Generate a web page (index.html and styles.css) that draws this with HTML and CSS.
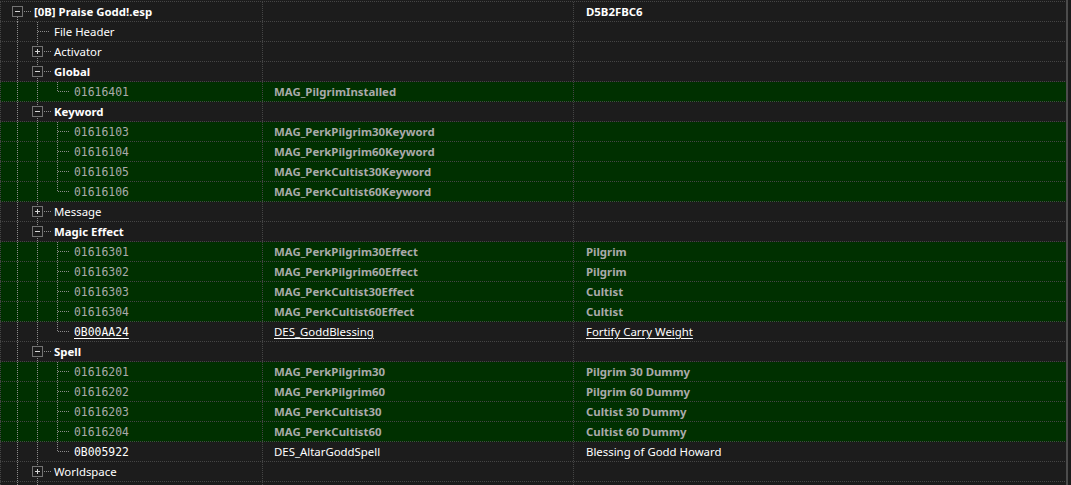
FILE: index.html
```html
<!DOCTYPE html>
<html>
<head>
<meta charset="utf-8">
<title>xEdit tree</title>
<link rel="stylesheet" href="styles.css">
</head>
<body>
<div class="view">
  <div class="tree">
    <div class="row">
      <div class="c1"><span class="e root"><i class="bx minus"></i><i class="h short"></i></span><span class="n b">[0B] Praise Godd!.esp</span></div>
      <div class="c2"></div>
      <div class="c3 b">D5B2FBC6</div>
    </div>
    <div class="row">
      <div class="c1"><span class="s v"></span><span class="e tee"><i class="h"></i></span><span class="n">File Header</span></div>
      <div class="c2"></div><div class="c3"></div>
    </div>
    <div class="row">
      <div class="c1"><span class="s v"></span><span class="e tee"><i class="bx plus"></i><i class="h short"></i></span><span class="n">Activator</span></div>
      <div class="c2"></div><div class="c3"></div>
    </div>
    <div class="row">
      <div class="c1"><span class="s v"></span><span class="e tee"><i class="bx minus"></i><i class="h short"></i></span><span class="n b">Global</span></div>
      <div class="c2"></div><div class="c3"></div>
    </div>
    <div class="row g">
      <div class="c1"><span class="s v"></span><span class="s v"></span><span class="e elb"><i class="h"></i></span><span class="id">01616401</span></div>
      <div class="c2">MAG_PilgrimInstalled</div><div class="c3"></div>
    </div>
    <div class="row">
      <div class="c1"><span class="s v"></span><span class="e tee"><i class="bx minus"></i><i class="h short"></i></span><span class="n b">Keyword</span></div>
      <div class="c2"></div><div class="c3"></div>
    </div>
    <div class="row g">
      <div class="c1"><span class="s v"></span><span class="s v"></span><span class="e tee"><i class="h"></i></span><span class="id">01616103</span></div>
      <div class="c2">MAG_PerkPilgrim30Keyword</div><div class="c3"></div>
    </div>
    <div class="row g">
      <div class="c1"><span class="s v"></span><span class="s v"></span><span class="e tee"><i class="h"></i></span><span class="id">01616104</span></div>
      <div class="c2">MAG_PerkPilgrim60Keyword</div><div class="c3"></div>
    </div>
    <div class="row g">
      <div class="c1"><span class="s v"></span><span class="s v"></span><span class="e tee"><i class="h"></i></span><span class="id">01616105</span></div>
      <div class="c2">MAG_PerkCultist30Keyword</div><div class="c3"></div>
    </div>
    <div class="row g">
      <div class="c1"><span class="s v"></span><span class="s v"></span><span class="e elb"><i class="h"></i></span><span class="id">01616106</span></div>
      <div class="c2">MAG_PerkCultist60Keyword</div><div class="c3"></div>
    </div>
    <div class="row">
      <div class="c1"><span class="s v"></span><span class="e tee"><i class="bx plus"></i><i class="h short"></i></span><span class="n">Message</span></div>
      <div class="c2"></div><div class="c3"></div>
    </div>
    <div class="row">
      <div class="c1"><span class="s v"></span><span class="e tee"><i class="bx minus"></i><i class="h short"></i></span><span class="n b">Magic Effect</span></div>
      <div class="c2"></div><div class="c3"></div>
    </div>
    <div class="row g">
      <div class="c1"><span class="s v"></span><span class="s v"></span><span class="e tee"><i class="h"></i></span><span class="id">01616301</span></div>
      <div class="c2">MAG_PerkPilgrim30Effect</div><div class="c3">Pilgrim</div>
    </div>
    <div class="row g">
      <div class="c1"><span class="s v"></span><span class="s v"></span><span class="e tee"><i class="h"></i></span><span class="id">01616302</span></div>
      <div class="c2">MAG_PerkPilgrim60Effect</div><div class="c3">Pilgrim</div>
    </div>
    <div class="row g">
      <div class="c1"><span class="s v"></span><span class="s v"></span><span class="e tee"><i class="h"></i></span><span class="id">01616303</span></div>
      <div class="c2">MAG_PerkCultist30Effect</div><div class="c3">Cultist</div>
    </div>
    <div class="row g">
      <div class="c1"><span class="s v"></span><span class="s v"></span><span class="e tee"><i class="h"></i></span><span class="id">01616304</span></div>
      <div class="c2">MAG_PerkCultist60Effect</div><div class="c3">Cultist</div>
    </div>
    <div class="row u">
      <div class="c1"><span class="s v"></span><span class="s v"></span><span class="e elb"><i class="h"></i></span><span class="id">0B00AA24</span></div>
      <div class="c2"><span class="t">DES_GoddBlessing</span></div><div class="c3"><span class="t">Fortify Carry Weight</span></div>
    </div>
    <div class="row">
      <div class="c1"><span class="s v"></span><span class="e tee"><i class="bx minus"></i><i class="h short"></i></span><span class="n b">Spell</span></div>
      <div class="c2"></div><div class="c3"></div>
    </div>
    <div class="row g">
      <div class="c1"><span class="s v"></span><span class="s v"></span><span class="e tee"><i class="h"></i></span><span class="id">01616201</span></div>
      <div class="c2">MAG_PerkPilgrim30</div><div class="c3">Pilgrim 30 Dummy</div>
    </div>
    <div class="row g">
      <div class="c1"><span class="s v"></span><span class="s v"></span><span class="e tee"><i class="h"></i></span><span class="id">01616202</span></div>
      <div class="c2">MAG_PerkPilgrim60</div><div class="c3">Pilgrim 60 Dummy</div>
    </div>
    <div class="row g">
      <div class="c1"><span class="s v"></span><span class="s v"></span><span class="e tee"><i class="h"></i></span><span class="id">01616203</span></div>
      <div class="c2">MAG_PerkCultist30</div><div class="c3">Cultist 30 Dummy</div>
    </div>
    <div class="row g">
      <div class="c1"><span class="s v"></span><span class="s v"></span><span class="e tee"><i class="h"></i></span><span class="id">01616204</span></div>
      <div class="c2">MAG_PerkCultist60</div><div class="c3">Cultist 60 Dummy</div>
    </div>
    <div class="row">
      <div class="c1"><span class="s v"></span><span class="s v"></span><span class="e elb"><i class="h"></i></span><span class="id">0B005922</span></div>
      <div class="c2">DES_AltarGoddSpell</div><div class="c3">Blessing of Godd Howard</div>
    </div>
    <div class="row">
      <div class="c1"><span class="s v"></span><span class="e tee"><i class="bx plus"></i><i class="h short"></i></span><span class="n">Worldspace</span></div>
      <div class="c2"></div><div class="c3"></div>
    </div>
    <div class="row">
      <div class="c1"><span class="s v"></span><span class="s v"></span></div>
      <div class="c2"></div><div class="c3"></div>
    </div>
  </div>
</div>
</body>
</html>
```

FILE: styles.css
```css
html, body {
  margin: 0;
  padding: 0;
  background: #1c1c1c;
  overflow: hidden;
}

.view {
  width: 1071px;
  height: 485px;
  overflow: hidden;
  background: #1c1c1c;
}

.tree {
  width: 1068px;
  height: 485px;
  box-sizing: border-box;
  padding-top: 2px;
  border-right: 2px solid #4c4c4c;
  background-image: repeating-linear-gradient(90deg, #454545 0 1px, transparent 1px 2px);
  background-size: 100% 1px;
  background-position: 0 1px;
  background-repeat: no-repeat;
  font-family: "Noto Sans", "Open Sans", sans-serif;
  font-size: 11.4px;
  color: #ffffff;
}

.row {
  display: flex;
  height: 20px;
  background-image: repeating-linear-gradient(90deg, #454545 0 1px, transparent 1px 2px);
  background-size: 100% 1px;
  background-position: 0 19px;
  background-repeat: no-repeat;
}

.row.g {
  background-color: #003000;
}

.row.g .c2,
.row.g .c3 {
  color: #aaaaaa;
  font-weight: 700;
}

.row.g .id {
  color: #aaaaaa;
}

.c1 {
  width: 262px;
  flex: none;
  display: flex;
  box-sizing: border-box;
  padding-left: 8px;
  background-image: linear-gradient(#454545 50%, transparent 50%);
  background-size: 1px 2px;
  background-position: 0 0;
  background-repeat: repeat-y;
}

.c2 {
  width: 311px;
  flex: none;
  box-sizing: border-box;
  padding-left: 12px;
  line-height: 19px;
  white-space: nowrap;
  background-image: linear-gradient(#454545 50%, transparent 50%);
  background-size: 1px 2px;
  background-repeat: repeat-y;
}

.c3 {
  flex: 1;
  box-sizing: border-box;
  padding-left: 13px;
  line-height: 19px;
  white-space: nowrap;
  background-image: linear-gradient(#454545 50%, transparent 50%);
  background-size: 1px 2px;
  background-repeat: repeat-y;
}

.b {
  font-weight: 700;
}

.n {
  line-height: 19px;
  white-space: nowrap;
}

.id {
  font-family: "DejaVu Sans Mono", "Liberation Mono", monospace;
  font-size: 11.4px;
  line-height: 21px;
  color: #ffffff;
}

.row.u .id,
.row.u .t {
  text-decoration: underline;
  text-underline-offset: 2px;
}

/* tree guides */
.s {
  width: 20px;
  height: 20px;
  flex: none;
}

.s.v {
  background-image: linear-gradient(#8c8c8c 50%, transparent 50%);
  background-size: 1px 2px;
  background-position: 9px 0;
  background-repeat: repeat-y;
}

.e {
  width: 26px;
  height: 20px;
  flex: none;
  display: flex;
  align-items: flex-start;
}

.e.tee {
  background-image: linear-gradient(#8c8c8c 50%, transparent 50%);
  background-size: 1px 2px;
  background-position: 9px 0;
  background-repeat: repeat-y;
}

.e.elb {
  background-image: repeating-linear-gradient(180deg, #8c8c8c 0 1px, transparent 1px 2px);
  background-size: 1px 10px;
  background-position: 9px 0;
  background-repeat: no-repeat;
}

.e.root {
  background-image: repeating-linear-gradient(180deg, #8c8c8c 0 1px, transparent 1px 2px);
  background-size: 1px 6px;
  background-position: 9px 15px;
  background-repeat: no-repeat;
}

.h {
  display: block;
  width: 12px;
  height: 1px;
  margin-left: 10px;
  margin-top: 9px;
  background-image: repeating-linear-gradient(90deg, #8c8c8c 0 1px, transparent 1px 2px);
}

.h.short {
  width: 7px;
  margin-left: 1px;
}

.bx {
  display: block;
  position: relative;
  width: 11px;
  height: 11px;
  margin-left: 4px;
  margin-top: 4px;
  box-sizing: border-box;
  border: 1px solid #737373;
  background: #1c1c1c;
  flex: none;
}

.bx::before {
  content: "";
  position: absolute;
  left: 2px;
  top: 4px;
  width: 5px;
  height: 1px;
  background: #d8d8d8;
}

.bx.plus::after {
  content: "";
  position: absolute;
  left: 4px;
  top: 2px;
  width: 1px;
  height: 5px;
  background: #d8d8d8;
}
```
